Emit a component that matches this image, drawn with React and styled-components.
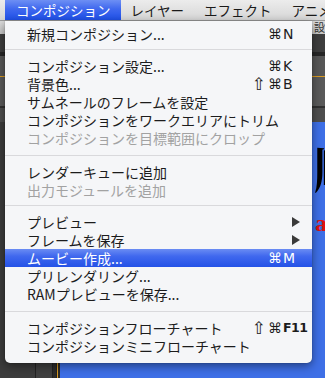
import React from "react";
import styled, { createGlobalStyle } from "styled-components";

const Global = createGlobalStyle`
  html, body { margin: 0; padding: 0; }
  body { width: 325px; height: 378px; overflow: hidden; background: #3a3a3a; }
`;

const Screen = styled.div`
  position: relative;
  width: 325px;
  height: 378px;
  overflow: hidden;
  display: flex;
  flex-direction: column;
  font-family: "Noto Sans CJK JP", "Noto Sans", sans-serif;
`;

const MenuBar = styled.div`
  height: 21px;
  flex: none;
  display: flex;
  align-items: stretch;
  padding-left: 5px;
  background: linear-gradient(#ececec, #d6d6d6);
  border-bottom: 1px solid #9a9a9a;
  box-sizing: border-box;
  white-space: nowrap;
`;

const BarItem = styled.div`
  display: flex;
  align-items: center;
  padding: 0 10px 0 ${(p) => (p.$first ? 11 : 10)}px;
  font-size: 13.5px;
  line-height: 20px;
  color: ${(p) => (p.$active ? "#fff" : "#1a1a1a")};
  background: ${(p) =>
    p.$active ? "linear-gradient(#6d8ff4, #3f68ee 45%, #1f50e8)" : "transparent"};
`;

const Workspace = styled.div`
  flex: 1;
  display: flex;
  flex-direction: column;
`;

const TopPanel = styled.div`
  height: 101px;
  flex: none;
  display: flex;
  flex-direction: column;
  background: #575757;
`;

const PanelHeader = styled.div`
  height: 13px;
  background: linear-gradient(#dadada, #c6c6c6);
  padding-left: 314px;
  font-size: 11px;
  line-height: 13px;
  color: #333;
  white-space: nowrap;
`;

const PanelBand = styled.div`
  height: ${(p) => p.$h}px;
  background: ${(p) => p.$bg};
  flex: none;
`;

const Lower = styled.div`
  flex: 1;
  display: flex;
`;

const SidePanel = styled.div`
  width: 57px;
  display: flex;
  background: #3a3a3a;
`;

const SideCol = styled.div`
  width: ${(p) => p.$w}px;
  background: ${(p) => p.$bg};
  border-right: 1px solid #222;
`;

const OrangeRule = styled.div`
  width: 1px;
  background: #d99a22;
`;

const Gap = styled.div`
  width: 2px;
  background: #2a2a2a;
`;

const Canvas = styled.div`
  flex: 1;
  background: #3e6fe6;
  overflow: hidden;
  padding: 18px 0 0 254px;
  display: flex;
  flex-direction: column;
  gap: 18px;
  white-space: nowrap;
`;

const Headline = styled.div`
  font-family: "Noto Serif CJK JP", "Noto Sans CJK JP", serif;
  font-weight: 900;
  font-size: 50px;
  line-height: 52px;
  color: #000;
`;

const RedLine = styled.div`
  font-family: "Liberation Serif", serif;
  font-weight: bold;
  font-size: 24px;
  line-height: 26px;
  color: #e01010;
  padding-left: 1px;
`;

const Dropdown = styled.div`
  position: absolute;
  top: 21px;
  left: 5px;
  width: 307px;
  padding: 4px 0 8px;
  background: #f5f6f8;
  border-radius: 0 0 5px 5px;
  box-shadow: 0 3px 10px rgba(0, 0, 0, 0.45), 0 0 1px rgba(0, 0, 0, 0.5);
  box-sizing: border-box;
`;

const Item = styled.div`
  height: 18px;
  display: flex;
  align-items: center;
  padding: 0 5px 0 22px;
  font-size: 14px;
  line-height: 18px;
  white-space: nowrap;
  color: ${(p) => (p.$hl ? "#fff" : p.$disabled ? "#a2a2a2" : "#1c1c1c")};
  background: ${(p) =>
    p.$hl ? "linear-gradient(#6a8cf3, #4068ee 40%, #2452e7)" : "transparent"};
`;

const Label = styled.span`
  flex: 1;
`;

const Mods = styled.span`
  display: flex;
  align-items: center;
  gap: 2px;
  font-family: "DejaVu Sans", sans-serif;
  font-size: 14px;
  margin-right: 1px;
`;

const Shift = styled.span`
  font-size: 17px;
  line-height: 18px;
`;

const Key = styled.span`
  width: 24px;
  font-family: "DejaVu Sans", sans-serif;
  font-size: ${(p) => (p.$small ? 12.5 : 14)}px;
  font-weight: ${(p) => (p.$small ? "bold" : "normal")};
  letter-spacing: ${(p) => (p.$small ? "-0.5px" : "0")};
  display: flex;
  align-items: center;
`;

const Arrow = styled.span`
  margin-left: 9px;
  width: 0;
  height: 0;
  border-left: 8px solid #3a3a3a;
  border-top: 5px solid transparent;
  border-bottom: 5px solid transparent;
`;

const Separator = styled.div`
  height: 1px;
  margin: ${(p) => (p.$wide ? "8px 0 7px" : "6px 0 7px")};
  background: #d9d9dc;
`;

const menu = [
  { label: "新規コンポジション...", key: "N" },
  "sep",
  { label: "コンポジション設定...", key: "K" },
  { label: "背景色...", shift: true, key: "B" },
  { label: "サムネールのフレームを設定" },
  { label: "コンポジションをワークエリアにトリム" },
  { label: "コンポジションを目標範囲にクロップ", disabled: true },
  "sepw",
  { label: "レンダーキューに追加" },
  { label: "出力モジュールを追加", disabled: true },
  "sep",
  { label: "プレビュー", sub: true },
  { label: "フレームを保存", sub: true },
  { label: "ムービー作成...", key: "M", hl: true },
  { label: "プリレンダリング..." },
  { label: "RAMプレビューを保存..." },
  "sepw",
  { label: "コンポジションフローチャート", shift: true, key: "F11", small: true },
  { label: "コンポジションミニフローチャート" },
];

export default function App() {
  return (
    <Screen>
      <Global />
      <MenuBar>
        <BarItem $first $active>コンポジション</BarItem>
        <BarItem>レイヤー</BarItem>
        <BarItem>エフェクト</BarItem>
        <BarItem>アニメーション</BarItem>
      </MenuBar>
      <Workspace>
        <TopPanel>
          <PanelHeader>設定</PanelHeader>
          <PanelBand $h={18} $bg="#3e3e3e" />
          <PanelBand $h={4} $bg="#262626" />
          <PanelBand $h={20} $bg="#575757" />
          <PanelBand $h={1} $bg="#d99a22" />
          <PanelBand $h={29} $bg="#5a5a5a" />
          <PanelBand $h={2} $bg="#303030" />
          <PanelBand $h={14} $bg="#4e4e4e" />
        </TopPanel>
        <Lower>
          <SidePanel>
            <SideCol $w={35} $bg="#3c3c3c" />
            <SideCol $w={16} $bg="#404040" />
            <SideCol $w={3} $bg="#2c2c2c" />
          </SidePanel>
          <OrangeRule />
          <Gap />
          <Canvas>
            <Headline>順番</Headline>
            <RedLine>ag</RedLine>
          </Canvas>
        </Lower>
      </Workspace>
      <Dropdown>
        {menu.map((m, i) =>
          m === "sep" || m === "sepw" ? (
            <Separator key={i} $wide={m === "sepw"} />
          ) : (
            <Item key={i} $hl={m.hl} $disabled={m.disabled}>
              <Label>{m.label}</Label>
              {m.key && (
                <Mods>
                  {m.shift && <Shift>⇧</Shift>}
                  <span>⌘</span>
                </Mods>
              )}
              {(m.key || m.sub) && (
                <Key $small={m.small}>{m.sub ? <Arrow /> : m.key}</Key>
              )}
            </Item>
          )
        )}
      </Dropdown>
    </Screen>
  );
}
